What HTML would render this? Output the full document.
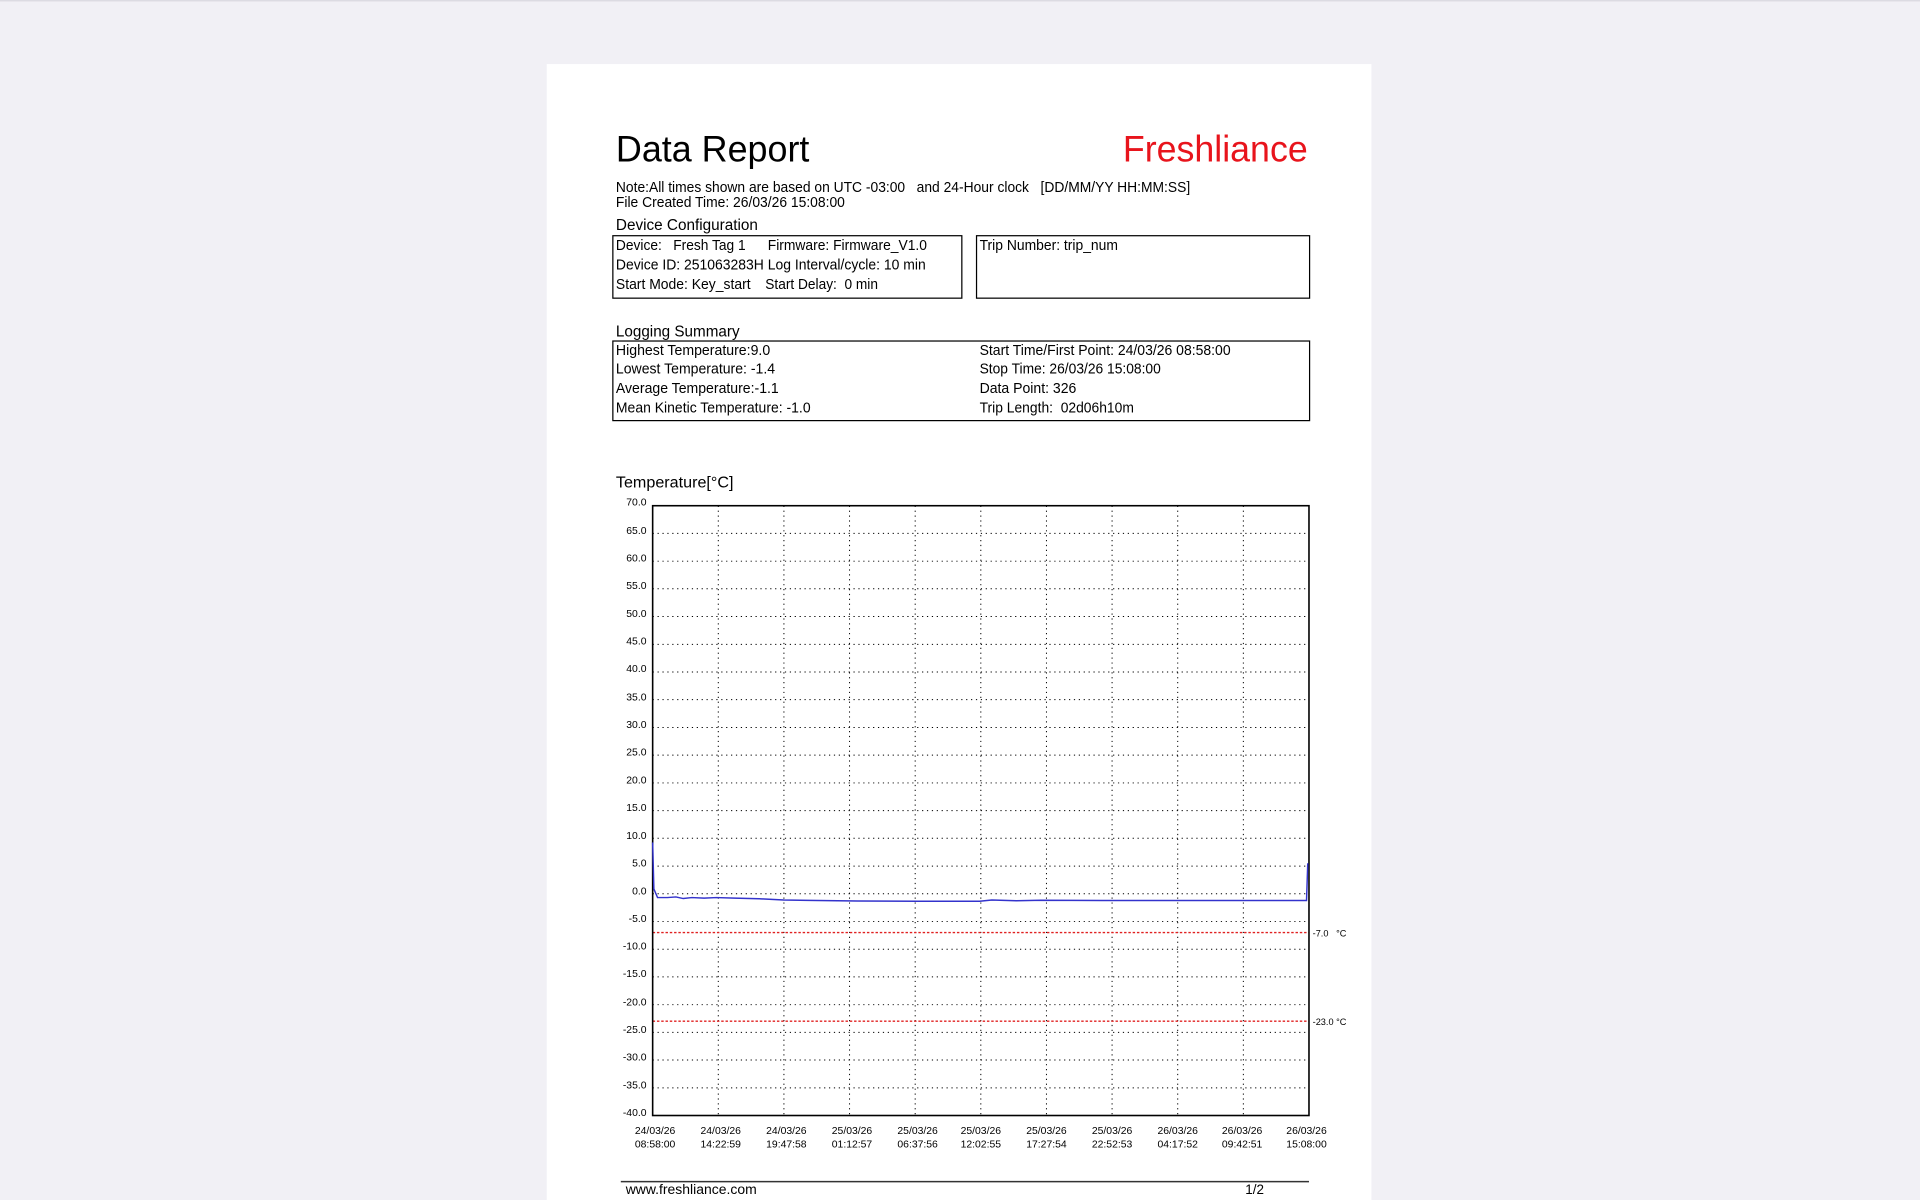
<!DOCTYPE html>
<html><head><meta charset="utf-8"><style>
html,body{margin:0;padding:0;background:#f1f0f5;overflow:hidden}
svg{display:block}
text{font-family:"Liberation Sans Narrow","Liberation Sans",Arial,sans-serif;fill:#000;white-space:pre}
</style></head><body>
<svg width="1920" height="1200" viewBox="0 0 1568 980" xmlns="http://www.w3.org/2000/svg" xml:space="preserve">
<rect x="0" y="0" width="1568" height="980" fill="#f1f0f5"/>
<rect x="0" y="0" width="1568" height="1.2" fill="#dcdbe2"/>
<rect x="446.5" y="52.3" width="673.5" height="930" fill="#fff"/>

<text x="503" y="132" font-size="30" textLength="158" lengthAdjust="spacingAndGlyphs">Data Report</text>
<text x="917" y="132" font-size="30" fill="#e8141c" style="fill:#e8141c" textLength="151" lengthAdjust="spacingAndGlyphs">Freshliance</text>

<g font-size="12">
<text x="503" y="157" textLength="469" lengthAdjust="spacingAndGlyphs">Note:All times shown are based on UTC -03:00   and 24-Hour clock   [DD/MM/YY HH:MM:SS]</text>
<text x="503" y="169" textLength="187" lengthAdjust="spacingAndGlyphs">File Created Time: 26/03/26 15:08:00</text>
</g>
<text x="503" y="188" font-size="13" textLength="116" lengthAdjust="spacingAndGlyphs">Device Configuration</text>
<rect x="500.5" y="192.5" width="285" height="51" fill="none" stroke="#000" stroke-width="1"/>
<rect x="797.5" y="192.5" width="272" height="51" fill="none" stroke="#000" stroke-width="1"/>
<g font-size="12">
<text x="503" y="204" textLength="106" lengthAdjust="spacingAndGlyphs">Device:   Fresh Tag 1</text>
<text x="627" y="204" textLength="130" lengthAdjust="spacingAndGlyphs">Firmware: Firmware_V1.0</text>
<text x="503" y="220" textLength="253" lengthAdjust="spacingAndGlyphs">Device ID: 251063283H Log Interval/cycle: 10 min</text>
<text x="503" y="236" textLength="110" lengthAdjust="spacingAndGlyphs">Start Mode: Key_start</text>
<text x="625" y="236" textLength="92" lengthAdjust="spacingAndGlyphs">Start Delay:  0 min</text>
<text x="800" y="204" textLength="113" lengthAdjust="spacingAndGlyphs">Trip Number: trip_num</text>
</g>

<text x="503" y="275" font-size="13" textLength="101" lengthAdjust="spacingAndGlyphs">Logging Summary</text>
<rect x="500.5" y="278.5" width="569" height="65" fill="none" stroke="#000" stroke-width="1"/>
<g font-size="12">
<text x="503" y="290" textLength="126" lengthAdjust="spacingAndGlyphs">Highest Temperature:9.0</text>
<text x="503" y="305" textLength="130" lengthAdjust="spacingAndGlyphs">Lowest Temperature: -1.4</text>
<text x="503" y="321" textLength="133" lengthAdjust="spacingAndGlyphs">Average Temperature:-1.1</text>
<text x="503" y="337" textLength="159" lengthAdjust="spacingAndGlyphs">Mean Kinetic Temperature: -1.0</text>
<text x="800" y="290" textLength="205" lengthAdjust="spacingAndGlyphs">Start Time/First Point: 24/03/26 08:58:00</text>
<text x="800" y="305" textLength="148" lengthAdjust="spacingAndGlyphs">Stop Time: 26/03/26 15:08:00</text>
<text x="800" y="321" textLength="79" lengthAdjust="spacingAndGlyphs">Data Point: 326</text>
<text x="800" y="337" textLength="126" lengthAdjust="spacingAndGlyphs">Trip Length:  02d06h10m</text>
</g>

<text x="503" y="398" font-size="13" textLength="96" lengthAdjust="spacingAndGlyphs">Temperature[°C]</text>

<g stroke="#000" stroke-width="0.8" stroke-dasharray="1 3">
<line x1="533" x2="1069" y1="435.6" y2="435.6"/><line x1="533" x2="1069" y1="458.3" y2="458.3"/>
<line x1="533" x2="1069" y1="480.8" y2="480.8"/><line x1="533" x2="1069" y1="503.5" y2="503.5"/>
<line x1="533" x2="1069" y1="526.2" y2="526.2"/><line x1="533" x2="1069" y1="548.8" y2="548.8"/>
<line x1="533" x2="1069" y1="571.4" y2="571.4"/><line x1="533" x2="1069" y1="594.1" y2="594.1"/>
<line x1="533" x2="1069" y1="616.7" y2="616.7"/><line x1="533" x2="1069" y1="639.4" y2="639.4"/>
<line x1="533" x2="1069" y1="662" y2="662"/><line x1="533" x2="1069" y1="684.6" y2="684.6"/>
<line x1="533" x2="1069" y1="707.3" y2="707.3"/><line x1="533" x2="1069" y1="729.9" y2="729.9"/>
<line x1="533" x2="1069" y1="752.5" y2="752.5"/><line x1="533" x2="1069" y1="775.2" y2="775.2"/>
<line x1="533" x2="1069" y1="797.8" y2="797.8"/><line x1="533" x2="1069" y1="820.5" y2="820.5"/>
<line x1="533" x2="1069" y1="843.1" y2="843.1"/><line x1="533" x2="1069" y1="865.7" y2="865.7"/>
<line x1="533" x2="1069" y1="888.4" y2="888.4"/>
<line y1="413" y2="911" x1="586.6" x2="586.6"/><line y1="413" y2="911" x1="640.2" x2="640.2"/>
<line y1="413" y2="911" x1="693.8" x2="693.8"/><line y1="413" y2="911" x1="747.4" x2="747.4"/>
<line y1="413" y2="911" x1="801" x2="801"/><line y1="413" y2="911" x1="854.6" x2="854.6"/>
<line y1="413" y2="911" x1="908.2" x2="908.2"/><line y1="413" y2="911" x1="961.8" x2="961.8"/>
<line y1="413" y2="911" x1="1015.4" x2="1015.4"/>
</g>
<g stroke="#e02020" stroke-width="1.1" stroke-dasharray="2 1.5">
<line x1="533" x2="1069" y1="761.6" y2="761.6"/>
<line x1="533" x2="1069" y1="834" y2="834"/>
</g>
<rect x="533" y="413" width="536" height="498" fill="none" stroke="#000" stroke-width="1.3"/>
<path d="M533,688 L534,726 L537,733 L545,733 L552,732.5 L558,733.8 L565,733 L575,733.5 L585,733 L600,733.5 L620,734 L640,735 L660,735.3 L700,735.8 L750,736 L800,736 L810,735 L830,735.6 L850,735.2 L900,735.4 L1000,735.4 L1067,735.4 L1068,705" fill="none" stroke="#3333cc" stroke-width="1.2"/>

<g font-size="8.5" text-anchor="end">
<text x="528" y="413">70.0</text><text x="528" y="436">65.0</text><text x="528" y="458.5">60.0</text>
<text x="528" y="481">55.0</text><text x="528" y="504">50.0</text><text x="528" y="526.5">45.0</text>
<text x="528" y="549">40.0</text><text x="528" y="572">35.0</text><text x="528" y="594.5">30.0</text>
<text x="528" y="617">25.0</text><text x="528" y="640">20.0</text><text x="528" y="662.5">15.0</text>
<text x="528" y="685">10.0</text><text x="528" y="707.5">5.0</text><text x="528" y="730.5">0.0</text>
<text x="528" y="753">-5.0</text><text x="528" y="775.5">-10.0</text><text x="528" y="798">-15.0</text>
<text x="528" y="821">-20.0</text><text x="528" y="843.5">-25.0</text><text x="528" y="866">-30.0</text>
<text x="528" y="889">-35.0</text><text x="528" y="911.5">-40.0</text>
</g>
<g font-size="7.5">
<text x="1072" y="765">-7.0   °C</text>
<text x="1072" y="837">-23.0 °C</text>
</g>
<g font-size="8.5" text-anchor="middle">
<text x="535" y="926">24/03/26</text><text x="535" y="937">08:58:00</text>
<text x="588.6" y="926">24/03/26</text><text x="588.6" y="937">14:22:59</text>
<text x="642.2" y="926">24/03/26</text><text x="642.2" y="937">19:47:58</text>
<text x="695.8" y="926">25/03/26</text><text x="695.8" y="937">01:12:57</text>
<text x="749.4" y="926">25/03/26</text><text x="749.4" y="937">06:37:56</text>
<text x="801" y="926">25/03/26</text><text x="801" y="937">12:02:55</text>
<text x="854.6" y="926">25/03/26</text><text x="854.6" y="937">17:27:54</text>
<text x="908.2" y="926">25/03/26</text><text x="908.2" y="937">22:52:53</text>
<text x="961.8" y="926">26/03/26</text><text x="961.8" y="937">04:17:52</text>
<text x="1014.4" y="926">26/03/26</text><text x="1014.4" y="937">09:42:51</text>
<text x="1067" y="926">26/03/26</text><text x="1067" y="937">15:08:00</text>
</g>

<line x1="507" x2="1069" y1="965" y2="965" stroke="#333" stroke-width="1.2"/>
<text x="511" y="975" font-size="11" textLength="107" lengthAdjust="spacingAndGlyphs">www.freshliance.com</text>
<text x="1017" y="975" font-size="11">1/2</text>
</svg>
</body></html>
